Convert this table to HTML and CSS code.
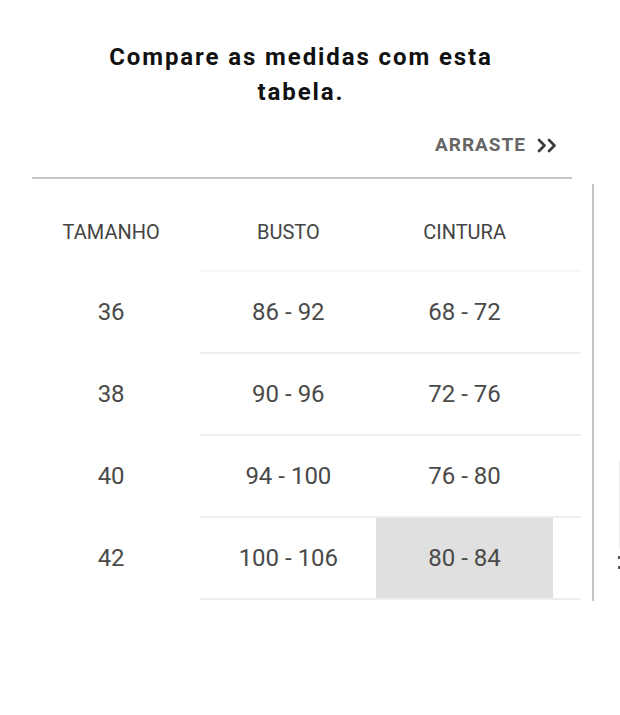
FILE: index.html
```html
<!DOCTYPE html>
<html lang="pt">
<head>
<meta charset="utf-8">
<title>Tabela de medidas</title>
<link rel="stylesheet" href="styles.css">
</head>
<body>
<main class="page">
  <div class="title-wrap">
    <h2 class="title">Compare as medidas com esta tabela.</h2>
  </div>
  <div class="drag-hint">
    <span class="drag-text">ARRASTE</span>
    <svg class="chev" width="21" height="15" viewBox="0 0 21 15" aria-hidden="true">
      <path d="M2 2 L7.5 7.5 L2 13" fill="none" stroke="#3a3a3a" stroke-width="2.7" stroke-linecap="round" stroke-linejoin="round"/>
      <path d="M12 2 L17.5 7.5 L12 13" fill="none" stroke="#3a3a3a" stroke-width="2.7" stroke-linecap="round" stroke-linejoin="round"/>
    </svg>
  </div>
  <div class="rule"></div>
  <div class="table-area">
    <div class="scroller">
      <table class="sizes">
        <thead>
          <tr>
            <th class="c1">TAMANHO</th>
            <th>BUSTO</th>
            <th>CINTURA</th>
            <th class="extra"></th>
          </tr>
        </thead>
        <tbody>
          <tr><td class="c1">36</td><td>86 - 92</td><td>68 - 72</td><td></td></tr>
          <tr><td class="c1">38</td><td>90 - 96</td><td>72 - 76</td><td></td></tr>
          <tr><td class="c1">40</td><td>94 - 100</td><td>76 - 80</td><td></td></tr>
          <tr><td class="c1">42</td><td>100 - 106</td><td class="hl">80 - 84</td><td></td></tr>
        </tbody>
      </table>
    </div>
    <div class="vbar"></div>
    <div class="edge">
      <span class="edge-line"></span>
      <span class="edge-dot"></span>
      <span class="edge-dot"></span>
    </div>
  </div>
</main>
</body>
</html>
```
FILE: styles.css
```css
html, body {
  margin: 0;
  padding: 0;
  background: #ffffff;
}

body {
  font-family: Roboto, "Noto Sans", "Liberation Sans", sans-serif;
  color: #444;
}

.page {
  width: 620px;
  height: 715px;
  overflow: hidden;
}

.title-wrap {
  padding: 40px 28px 0 10px;
}

.title {
  width: 400px;
  margin: 0 auto;
  font-size: 24px;
  line-height: 35px;
  font-weight: 700;
  letter-spacing: 1.9px;
  text-align: center;
  color: #111;
}

.drag-hint {
  margin-top: 23px;
  padding-right: 62px;
  display: flex;
  justify-content: flex-end;
  align-items: center;
  gap: 11px;
  height: 24px;
}

.drag-text {
  font-size: 19px;
  font-weight: 700;
  letter-spacing: 1px;
  color: #666;
  line-height: 24px;
}

.chev {
  display: block;
  margin-top: 1px;
}

.rule {
  margin: 20px 48px 0 32px;
  height: 2px;
  background: #c6c6c6;
}

.table-area {
  margin-top: 5px;
  display: flex;
  align-items: flex-start;
}

.scroller {
  margin-left: 22px;
  width: 559px;
  overflow: hidden;
  flex: none;
}

.sizes {
  border-collapse: collapse;
  table-layout: fixed;
  width: 707px;
}

.sizes th,
.sizes td {
  padding: 0;
  text-align: center;
  font-weight: 400;
  white-space: nowrap;
}

.sizes th {
  width: 176px;
  height: 87px;
  font-size: 20px;
  line-height: 24px;
  color: #444;
  vertical-align: top;
  padding-top: 36px;
  box-sizing: border-box;
  border-bottom: 2px solid #f7f7f7;
}

.sizes th.c1 {
  width: 178px;
  border-bottom-color: #ffffff;
}

.sizes td {
  height: 82px;
  box-sizing: border-box;
  font-size: 24px;
  line-height: 28px;
  color: #4a4a4a;
  padding-top: 26px;
  vertical-align: top;
  border-bottom: 2px solid #eeeeee;
}

.sizes td.c1 {
  border-bottom-color: #ffffff;
}

.sizes td.hl {
  background: #e0e0e0;
}

.vbar {
  flex: none;
  width: 2px;
  height: 417px;
  margin-left: 11px;
  background: #c4c4c4;
}

.edge {
  flex: none;
  margin-left: 23px;
  width: 3px;
  padding-top: 277px;
  display: flex;
  flex-direction: column;
  align-items: flex-end;
  gap: 7px;
}

.edge-line {
  display: block;
  width: 1px;
  height: 88px;
  background: #f0f0f0;
}

.edge-dot {
  display: block;
  width: 2px;
  height: 3px;
  background: #555;
}
```
